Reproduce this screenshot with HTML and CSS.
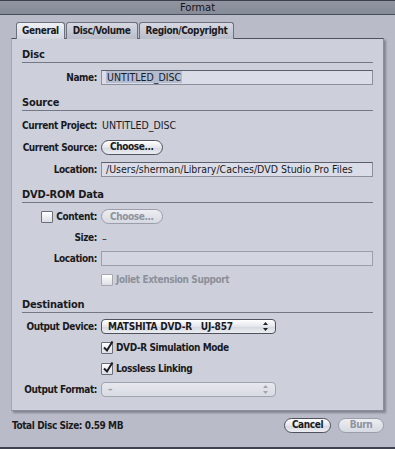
FILE: index.html
```html
<!DOCTYPE html>
<html lang="en">
<head>
    <meta charset="UTF-8">
    <meta name="viewport" content="width=device-width, initial-scale=1.0">
    <title>Format</title>
    <link rel="stylesheet" href="styles.css">
</head>
<body>
    <div class="window">
        <div class="titlebar">Format</div>

        <div class="tabs">
            <div class="tab selected">General</div>
            <div class="tab">Disc/Volume</div>
            <div class="tab">Region/Copyright</div>
        </div>

        <div class="panel">
            <div class="sec-head">Disc</div>
            <div class="row first">
                <span class="label">Name:</span>
                <div class="field"><span class="sel">UNTITLED_DISC</span></div>
            </div>

            <div class="sec-head">Source</div>
            <div class="row first">
                <span class="label">Current Project:</span>
                <span class="value">UNTITLED_DISC</span>
            </div>
            <div class="row">
                <span class="label">Current Source:</span>
                <div><button class="btn">Choose...</button></div>
            </div>
            <div class="row">
                <span class="label">Location:</span>
                <div class="field">/Users/sherman/Library/Caches/DVD Studio Pro Files</div>
            </div>

            <div class="sec-head">DVD-ROM Data</div>
            <div class="row first short">
                <span class="label"><span class="check"></span>Content:</span>
                <div><button class="btn disabled">Choose...</button></div>
            </div>
            <div class="row short">
                <span class="label">Size:</span>
                <span class="value">–</span>
            </div>
            <div class="row short">
                <span class="label">Location:</span>
                <div class="field empty"></div>
            </div>
            <div class="row short">
                <span></span>
                <span class="checkline dim"><span class="check dis"></span>Joliet Extension Support</span>
            </div>

            <div class="sec-head">Destination</div>
            <div class="row first short">
                <span class="label">Output Device:</span>
                <div class="popup">
                    <span>MATSHITA DVD-R&nbsp;&nbsp;&nbsp;UJ-857</span>
                    <svg class="arrows" width="5" height="9" viewBox="0 0 5 9"><path d="M2.5 0 L5 3 L0 3 Z M0 6 L5 6 L2.5 9 Z" fill="#222"/></svg>
                </div>
            </div>
            <div class="row short">
                <span></span>
                <span class="checkline"><span class="check on"><svg width="12" height="12" viewBox="0 0 12 12"><path d="M2 6.5 L5 9.5 L10.5 0.5" fill="none" stroke="#1c1c22" stroke-width="2"/></svg></span>DVD-R Simulation Mode</span>
            </div>
            <div class="row short">
                <span></span>
                <span class="checkline"><span class="check on"><svg width="12" height="12" viewBox="0 0 12 12"><path d="M2 6.5 L5 9.5 L10.5 0.5" fill="none" stroke="#1c1c22" stroke-width="2"/></svg></span>Lossless Linking</span>
            </div>
            <div class="row short">
                <span class="label">Output Format:</span>
                <div class="popup disabled">
                    <span>–</span>
                    <svg class="arrows" width="5" height="9" viewBox="0 0 5 9"><path d="M2.5 0 L5 3 L0 3 Z M0 6 L5 6 L2.5 9 Z" fill="#a0a4ae"/></svg>
                </div>
            </div>
        </div>

        <div class="footer">
            <span class="total">Total Disc Size: 0.59 MB</span>
            <div class="actions">
                <button class="btn">Cancel</button>
                <button class="btn disabled">Burn</button>
            </div>
        </div>
    </div>
</body>
</html>
```

FILE: styles.css
```css
body{
    margin: 0;
    background: #b9bcc8;
    font-family: "DejaVu Sans Condensed", "DejaVu Sans", sans-serif;
    font-size: 10px;
    color: #1a1a1e;
}
.window{
    width: 395px;
    height: 449px;
    background: #b9bcc8;
    border-bottom: 2px solid #3e4250;
    box-sizing: border-box;
}
.titlebar{
    height: 15px;
    line-height: 14px;
    text-align: center;
    background: linear-gradient(#9095a1, #868b98);
    border-top: 1px solid #3c404c;
    border-bottom: 1px solid #4a4e5a;
    box-sizing: border-box;
    font-family: "DejaVu Sans", sans-serif;
    font-size: 10px;
    color: #15151a;
}
.tabs{
    display: flex;
    margin: 7px 0 0 16px;
    height: 17px;
    position: relative;
    z-index: 1;
}
.tab{
    padding: 0 6px;
    line-height: 16px;
    font-weight: bold;
    letter-spacing: -0.4px;
    border: 1px solid #6d717e;
    border-bottom: none;
    border-radius: 3px 3px 0 0;
    background: linear-gradient(#d6d9e2, #b9bdc9);
    margin-right: 1px;
}
.tab.selected{
    background: linear-gradient(#eef0f5, #d3d6e0);
    padding: 0 5px;
}
.panel{
    margin-left: 11px;
    width: 373px;
    height: 373px;
    box-sizing: border-box;
    background: #cdd0db;
    border-top: 1px solid #4c505e;
    border-right: 1px solid #8a8e9a;
    border-bottom: 1px solid #8a8e9a;
    border-left: 1px solid #a4a8b4;
    box-shadow: 2px 2px 2px rgba(60, 64, 78, 0.45);
    padding: 0 10px;
    margin-top: -1px;
}
.sec-head{
    height: 16px;
    line-height: 17px;
    margin-top: 6px;
    border-bottom: 1px solid #747886;
    font-size: 11px;
    font-weight: bold;
    letter-spacing: -0.2px;
}
.panel .sec-head:first-child{
    margin-top: 7px;
}
.row{
    display: grid;
    grid-template-columns: 75px 1fr;
    column-gap: 4px;
    align-items: center;
    height: 22px;
}
.row.first{
    margin-top: 3px;
}
.row.short{
    height: 21px;
}
.label{
    text-align: right;
    font-weight: bold;
    letter-spacing: -0.4px;
    white-space: nowrap;
    display: flex;
    justify-content: flex-end;
    align-items: center;
}
.value{
    padding-left: 1px;
    font-size: 10.5px;
}
.field{
    height: 15px;
    box-sizing: border-box;
    border: 1px solid #8c909c;
    border-top-color: #5c606c;
    background: #dadde7;
    line-height: 13px;
    padding-left: 4px;
    font-size: 10.5px;
    white-space: nowrap;
    overflow: hidden;
}
.field.empty{
    background: #d3d6e0;
    border-color: #9b9fab;
}
.sel{
    background: #b4bccf;
    padding: 0 1px;
}
.btn{
    font-family: inherit;
    font-size: 10px;
    font-weight: bold;
    letter-spacing: -0.4px;
    color: #1a1a1e;
    height: 15px;
    padding: 0 8px;
    border: 1px solid #4e525c;
    border-radius: 8px;
    background: linear-gradient(#ffffff, #e4e6ec 50%, #d4d7df 51%, #eceef2);
    line-height: 12px;
}
.btn.disabled{
    color: #8f939e;
    border-color: #9a9eaa;
    background: linear-gradient(#eceef2, #d6d9e1);
}
.check{
    display: inline-flex;
    align-items: center;
    justify-content: center;
    width: 12px;
    height: 12px;
    box-sizing: border-box;
    border: 1px solid #6a6e78;
    border-radius: 1px;
    background: linear-gradient(#ffffff, #dcdee4);
    margin-right: 3px;
    overflow: visible;
}
.check svg{
    flex: none;
    margin: -2px -1px 0 0;
}
.check.dis{
    border-color: #a4a8b2;
}
.label .check{
    margin-right: 3px;
}
.checkline{
    display: flex;
    align-items: center;
    font-weight: bold;
    letter-spacing: -0.4px;
}
.checkline.dim{
    color: #8c909a;
}
.popup{
    width: 175px;
    height: 15px;
    box-sizing: border-box;
    border: 1px solid #4e525c;
    border-radius: 4px;
    background: linear-gradient(#ffffff, #e4e6ec 50%, #d4d7df 51%, #eceef2);
    font-weight: bold;
    letter-spacing: -0.2px;
    line-height: 13px;
    padding: 0 7px 0 6px;
    display: flex;
    justify-content: space-between;
    align-items: center;
}
.popup.disabled{
    border-color: #a0a4ae;
    color: #9a9ea8;
    background: linear-gradient(#e6e8ee, #d8dbe2);
}
.footer{
    display: flex;
    justify-content: space-between;
    align-items: center;
    margin-top: 6px;
    padding: 0 11px 0 12px;
    height: 16px;
}
.total{
    font-weight: bold;
    letter-spacing: -0.4px;
}
.actions{
    display: flex;
    gap: 7px;
}
.actions .btn{
    width: 47px;
    padding: 0;
}
.actions .btn.disabled{
    width: 46px;
}
```
